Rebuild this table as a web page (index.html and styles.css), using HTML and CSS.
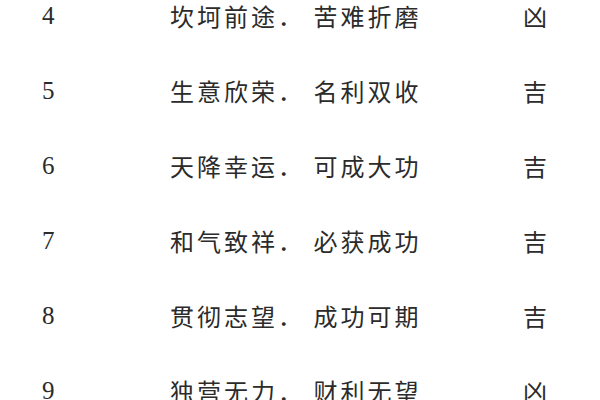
FILE: index.html
```html
<!DOCTYPE html>
<html lang="zh-CN">
<head>
<meta charset="utf-8">
<link rel="stylesheet" href="styles.css">
</head>
<body>
<div class="table">
  <div class="row"><span class="num">4</span><span class="desc">坎坷前途． 苦难折磨</span><span class="luck">凶</span></div>
  <div class="row"><span class="num">5</span><span class="desc">生意欣荣． 名利双收</span><span class="luck">吉</span></div>
  <div class="row"><span class="num">6</span><span class="desc">天降幸运． 可成大功</span><span class="luck">吉</span></div>
  <div class="row"><span class="num">7</span><span class="desc">和气致祥． 必获成功</span><span class="luck">吉</span></div>
  <div class="row"><span class="num">8</span><span class="desc">贯彻志望． 成功可期</span><span class="luck">吉</span></div>
  <div class="row"><span class="num">9</span><span class="desc">独营无力． 财利无望</span><span class="luck">凶</span></div>
</div>
</body>
</html>
```
FILE: styles.css
```css
html, body {
  margin: 0;
  padding: 0;
  background: #ffffff;
  width: 600px;
  height: 400px;
  overflow: hidden;
}
.table {
  display: flex;
  flex-direction: column;
  margin-top: -22px;
  padding-left: 42px;
  color: #2b2b2b;
}
.row {
  display: grid;
  grid-template-columns: 128px 352px auto;
  height: 75px;
  align-items: center;
  line-height: 75px;
}
.num {
  font-family: "Liberation Serif", serif;
  font-size: 25px;
}
.desc, .luck {
  font-family: "Noto Sans CJK SC", sans-serif;
  font-size: 24px;
  white-space: pre;
}
.desc {
  letter-spacing: 3px;
}
.luck {
  margin-left: 1px;
}
```
